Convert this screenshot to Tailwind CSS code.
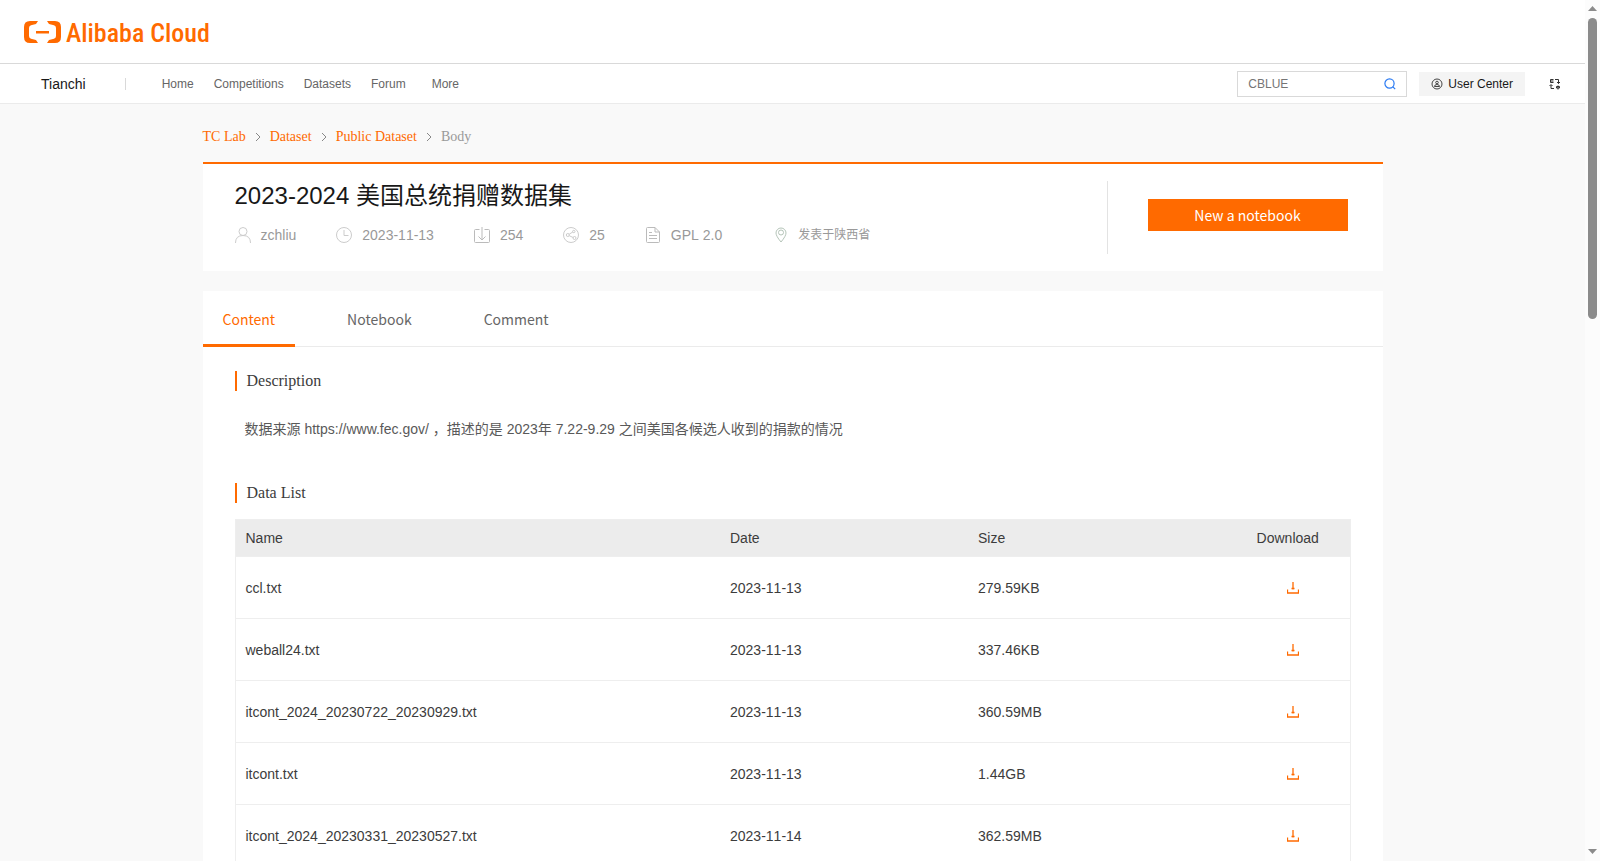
<!DOCTYPE html>
<html lang="en">
<head>
  <meta charset="utf-8">
  <meta name="viewport" content="width=device-width, initial-scale=1">
  <title>2023-2024 美国总统捐赠数据集 - Tianchi</title>
  <script src="https://cdn.jsdelivr.net/npm/@tailwindcss/browser@4"></script>
</head>
<body class="flex h-screen overflow-hidden bg-[#f9f9f9] font-['Liberation_Sans','Noto_Sans_CJK_SC',sans-serif] text-sm text-[#3c3c3c]">
  <svg class="hidden">
    <symbol id="download" viewBox="0 0 12 12">
      <path d="M6 0v7.500M4.500 6.500h3M.5 7.500v3.500h11V7.500" fill="none" stroke="#ff6a00" stroke-width="1.300"/>
    </symbol>
  </svg>

  <div class="h-full min-w-0 flex-1 overflow-y-auto [scrollbar-width:none]">
    <header class="flex h-16 items-center border-b border-[#d9d9d9] bg-white px-6">
      <a href="#" class="flex items-center gap-[5px] text-[#ff6a00]" aria-label="Alibaba Cloud">
        <svg class="h-[22px] w-[37px]" viewBox="0 0 37 22" fill="currentColor">
          <path d="M14 0H6Q0 0 0 6v10q0 6 6 6h8l-2-3-5-1.200Q5 17.300 5 15V7q0-2.300 2-2.800L12 3zM23 0h8q6 0 6 6v10q0 6-6 6h-8l2-3 5-1.200q2-.5 2-2.800V7q0-2.300-2-2.800L25 3z"/>
          <path d="M12 10h13v2.500H12z"/>
        </svg>
        <span class="pt-0.5 font-['Roboto_Condensed','Roboto',sans-serif] text-[26px] leading-8 font-medium">Alibaba Cloud</span>
      </a>
    </header>

    <nav class="flex h-10 items-center justify-between border-b border-[#ebebeb] bg-white pr-6 pl-[41px] text-xs text-[#666]">
      <div class="flex items-center">
        <a href="#" class="text-sm text-[#181818]">Tianchi</a>
        <span class="mr-9 ml-[39px] h-3 w-px bg-[#d9d9d9]"></span>
        <div class="flex gap-5">
          <a href="#">Home</a>
          <a href="#">Competitions</a>
          <a href="#">Datasets</a>
          <a href="#">Forum</a>
          <a href="#" class="ml-1.5">More</a>
        </div>
      </div>
      <div class="flex items-center">
        <label class="flex h-[26px] w-[170px] items-center border border-[#d9d9d9] px-2.5">
          <input type="text" placeholder="CBLUE" aria-label="Search" class="min-w-0 flex-1 outline-none placeholder:text-[#757575]">
          <svg class="size-3" viewBox="0 0 12 12" fill="none" stroke="#2b7bf3" stroke-width="1.200"><circle cx="5.500" cy="5.500" r="4.600"/><path d="m8.700 8.700 2.500 2.500"/></svg>
        </label>
        <button class="ml-3 flex h-6 items-center gap-[5px] bg-[#f4f4f4] px-3 text-[#181818]">
          <svg class="size-3" viewBox="0 0 12 12" fill="none" stroke="#444"><circle cx="6" cy="6" r="5"/><circle cx="6" cy="4.500" r="1.300"/><path d="M3.500 8.500q0-2 2.500-2t2.500 2z"/></svg>
          User Center
        </button>
        <button class="ml-6 text-[#333]" aria-label="Language">
          <svg class="size-3" viewBox="0 0 12 12" fill="none" stroke="currentColor"><path d="M4.500 1.500h-3v3h3M1.500 3h3M6 1.500h3.500v4M8 4l1.500 1.500L11 4M5 10.500H2V7M.5 8 2 6.500 3.500 8M7.500 8.500h3v1.500h-3zM9 7.500v4"/></svg>
        </button>
      </div>
    </nav>

    <main class="mx-auto max-w-[1180px]">
      <div class="flex h-[58px] items-center gap-1.5 pt-2 font-['Liberation_Serif',serif] text-[#ff6a00]">
        <a href="#">TC Lab</a>
        <svg class="size-3" viewBox="0 0 12 12" fill="none" stroke="#888"><path d="m4 2 4 4-4 4"/></svg>
        <a href="#">Dataset</a>
        <svg class="size-3" viewBox="0 0 12 12" fill="none" stroke="#888"><path d="m4 2 4 4-4 4"/></svg>
        <a href="#">Public Dataset</a>
        <svg class="size-3" viewBox="0 0 12 12" fill="none" stroke="#888"><path d="m4 2 4 4-4 4"/></svg>
        <span class="text-[#999]">Body</span>
      </div>

      <section class="flex justify-between border-t-2 border-[#ff6a00] bg-white py-[17px] pr-[35px] pl-8">
        <div>
          <h1 class="text-2xl leading-[30px] text-[#181818]">2023-2024 美国总统捐赠数据集</h1>
          <div class="mt-3.5 flex h-5 items-center gap-10 text-[#999] [font-kerning:none]">
            <span class="flex items-center gap-2.5">
              <svg class="size-4" viewBox="0 0 16 16" fill="none" stroke="#ccc"><circle cx="8" cy="4.500" r="4"/><path d="M.5 16q0-7.500 7.500-7.500t7.500 7.500"/></svg>
              zchliu
            </span>
            <span class="flex items-center gap-2.5">
              <svg class="size-4" viewBox="0 0 16 16" fill="none" stroke="#ccc"><circle cx="8" cy="8" r="7.500"/><path d="M8 3v5.500h4.500"/></svg>
              2023-11-13
            </span>
            <span class="flex items-center gap-2.5">
              <svg class="size-4" viewBox="0 0 16 16" fill="none" stroke="#bbb"><path d="M5.500 2.500h-4q-1 0-1 1v11q0 1 1 1h13q1 0 1-1v-11q0-1-1-1h-4M8 0v13M4.500 9.500 8 13l3.500-3.500"/></svg>
              254
            </span>
            <span class="flex items-center gap-2.5">
              <svg class="size-4" viewBox="0 0 16 16" fill="none" stroke="#ccc"><circle cx="8" cy="8" r="7.500"/><circle cx="4.800" cy="8" r="1.500"/><circle cx="10.800" cy="4.500" r="1.200"/><circle cx="11.500" cy="11" r="1.500"/><path d="M6.200 7.200 9.800 5M6.200 8.700l4 1.800"/></svg>
              25
            </span>
            <span class="flex items-center gap-2.5">
              <svg class="size-4" viewBox="0 0 16 16" fill="none" stroke="#bbb"><path d="M10 .5H2.500q-1 0-1 1v13q0 1 1 1h11q1 0 1-1V5zV5h4.500M4 5.500h3M4 8.500h8M4 11.500h8"/></svg>
              GPL 2.0
            </span>
            <span class="ml-3 flex items-center gap-2.5 text-xs">
              <svg class="h-4 w-3.5" viewBox="0 0 14 16" fill="none" stroke="#b4c4b8"><path d="M7 15Q2 9 2 6a5 5 0 0 1 10 0Q12 9 7 15z"/><circle cx="7" cy="5.500" r="2.500"/></svg>
              发表于陕西省
            </span>
          </div>
        </div>
        <div class="flex h-[73px] items-center border-l border-[#e3e3e3] pl-10">
          <button class="mb-1.5 h-8 w-[200px] bg-[#ff6a00] font-['Noto_Sans_CJK_SC',sans-serif] text-sm text-white">New a notebook</button>
        </div>
      </section>

      <section class="mt-5 bg-white">
        <div class="flex h-14 gap-8 border-b border-[#ebebeb] font-['Noto_Sans_CJK_SC',sans-serif] text-sm text-[#666]" role="tablist">
          <button role="tab" class="-mb-px border-b-3 border-[#ff6a00] px-5 pt-0.5 text-[#ff6a00]">Content</button>
          <button role="tab" class="-mb-px border-b-3 border-transparent px-5 pt-0.5">Notebook</button>
          <button role="tab" class="-mb-px border-b-3 border-transparent px-5 pt-0.5">Comment</button>
        </div>

        <div class="px-8 pt-6 pb-10">
          <h2 class="border-l-2 border-[#ff6a00] pl-2.5 font-['Liberation_Serif',serif] text-base leading-5">Description</h2>
          <p class="mt-6.5 pl-2.5 leading-6 text-[#595959]">数据来源 https://www.fec.gov/ ，描述的是 2023年 7.22-9.29 之间美国各候选人收到的捐款的情况</p>

          <h2 class="mt-10.5 border-l-2 border-[#ff6a00] pl-2.5 font-['Liberation_Serif',serif] text-base leading-5">Data List</h2>
          <table class="mt-4 w-full table-fixed border-collapse border border-[#eee] text-left [font-kerning:none]">
            <thead>
              <tr class="h-[37px] bg-[#ececec]">
                <th class="px-2.5 font-normal">Name</th>
                <th class="w-[248px] px-2.5 font-normal">Date</th>
                <th class="w-[258px] px-2.5 font-normal">Size</th>
                <th class="w-[124px] font-normal text-center">Download</th>
              </tr>
            </thead>
            <tbody>
              <tr class="h-[62px] border-t border-[#eee]">
                <td class="px-2.5">ccl.txt</td>
                <td class="px-2.5">2023-11-13</td>
                <td class="px-2.5">279.59KB</td>
                <td class="pl-2.5"><a href="#" aria-label="Download ccl.txt"><svg class="mx-auto size-3"><use href="#download"/></svg></a></td>
              </tr>
              <tr class="h-[62px] border-t border-[#eee]">
                <td class="px-2.5">weball24.txt</td>
                <td class="px-2.5">2023-11-13</td>
                <td class="px-2.5">337.46KB</td>
                <td class="pl-2.5"><a href="#" aria-label="Download weball24.txt"><svg class="mx-auto size-3"><use href="#download"/></svg></a></td>
              </tr>
              <tr class="h-[62px] border-t border-[#eee]">
                <td class="px-2.5">itcont_2024_20230722_20230929.txt</td>
                <td class="px-2.5">2023-11-13</td>
                <td class="px-2.5">360.59MB</td>
                <td class="pl-2.5"><a href="#" aria-label="Download itcont_2024_20230722_20230929.txt"><svg class="mx-auto size-3"><use href="#download"/></svg></a></td>
              </tr>
              <tr class="h-[62px] border-t border-[#eee]">
                <td class="px-2.5">itcont.txt</td>
                <td class="px-2.5">2023-11-13</td>
                <td class="px-2.5">1.44GB</td>
                <td class="pl-2.5"><a href="#" aria-label="Download itcont.txt"><svg class="mx-auto size-3"><use href="#download"/></svg></a></td>
              </tr>
              <tr class="h-[62px] border-t border-[#eee]">
                <td class="px-2.5">itcont_2024_20230331_20230527.txt</td>
                <td class="px-2.5">2023-11-14</td>
                <td class="px-2.5">362.59MB</td>
                <td class="pl-2.5"><a href="#" aria-label="Download itcont_2024_20230331_20230527.txt"><svg class="mx-auto size-3"><use href="#download"/></svg></a></td>
              </tr>
            </tbody>
          </table>
        </div>
      </section>
    </main>
  </div>

  <!-- scrollbar -->
  <div class="flex w-[15px] flex-col items-center bg-[#fcfcfc] pt-1.5 pb-[7px]" aria-hidden="true">
    <svg class="h-[5px] w-[9px]" viewBox="0 0 9 5" fill="#8b8b8b"><path d="M0 5 4.500 0 9 5z"/></svg>
    <div class="mt-[7px] h-[301px] w-[9px] rounded-full bg-[#8b8b8b]"></div>
    <svg class="mt-auto h-[5px] w-[9px]" viewBox="0 0 9 5" fill="#8b8b8b"><path d="M0 0h9L4.500 5z"/></svg>
  </div>
</body>
</html>
